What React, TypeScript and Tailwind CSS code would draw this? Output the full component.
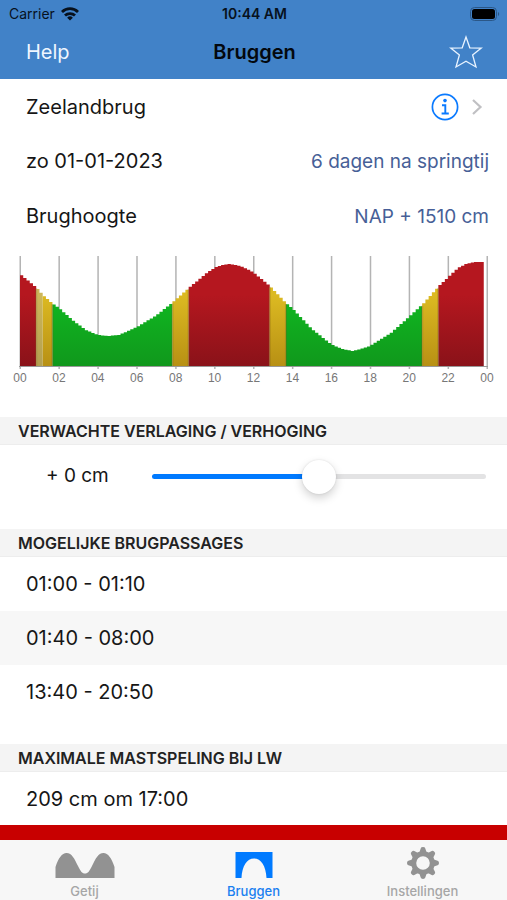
import { useState } from 'react';

// bar tops as [x, y] along the tide curve
const curve = [
  [0, 274], [16, 287], [23, 295], [32, 303], [39, 308], [55, 322], [66, 330], [78, 335],
  [88, 336], [99, 335], [117, 327], [137, 315], [152, 303], [170, 287], [188, 272], [196, 267],
  [202, 265], [209, 264], [216, 265], [223, 267], [233, 272], [250, 286], [266, 303], [273, 309],
  [292, 329], [311, 344], [322, 349], [333, 351], [341, 349], [350, 346], [371, 333], [389, 317],
  [403, 304], [420, 285], [438, 268], [446, 264], [455, 262], [467, 262],
];

// colour ranges in steps of ten minutes
const zones = [
  { from: 0, to: 5, fill: 'url(#red)' },
  { from: 5, to: 7, fill: 'url(#pale)' },
  { from: 7, to: 10, fill: 'url(#yellow)' },
  { from: 10, to: 47, fill: 'url(#green)' },
  { from: 47, to: 52, fill: 'url(#yellow)' },
  { from: 52, to: 77, fill: 'url(#red)' },
  { from: 77, to: 82, fill: 'url(#yellow)' },
  { from: 82, to: 124, fill: 'url(#green)' },
  { from: 124, to: 129, fill: 'url(#yellow)' },
  { from: 129, to: 143, fill: 'url(#red)' },
];

const hours = ['00', '02', '04', '06', '08', '10', '12', '14', '16', '18', '20', '22', '00'];
const passages = ['01:00 - 01:10', '01:40 - 08:00', '13:40 - 20:50'];
const STEP = 467 / 144;

function topAt(x: number) {
  const i = Math.max(1, curve.findIndex(([cx]) => cx >= x));
  const [x0, y0] = curve[i - 1];
  const [x1, y1] = curve[i];
  return y0 + ((y1 - y0) * (x - x0)) / (x1 - x0) - 244;
}

function zonePath(from: number, to: number) {
  let d = `M${20 + from * STEP} 122`;
  for (let i = from; i < to; i++) {
    d += `V${topAt((i + 0.5) * STEP).toFixed(1)}H${(20 + (i + 1) * STEP).toFixed(2)}`;
  }
  return d + 'V122Z';
}

function Gradient({ id, from, to }: { id: string; from: string; to: string }) {
  return (
    <linearGradient id={id} gradientUnits="userSpaceOnUse" x1="0" y1="20" x2="0" y2="122">
      <stop offset="0.3" stopColor={from} />
      <stop offset="1" stopColor={to} />
    </linearGradient>
  );
}

function TideChart() {
  return (
    <svg viewBox="0 0 507 146" className="block w-full" role="img" aria-label="Brughoogte per uur">
      <defs>
        <Gradient id="red" from="#b5171f" to="#8a1219" />
        <Gradient id="yellow" from="#dcba22" to="#b89014" />
        <Gradient id="pale" from="#cdb75a" to="#b3a050" />
        <Gradient id="green" from="#10b821" to="#10981c" />
      </defs>
      {hours.map((_, i) => (
        <rect key={i} x={19.5 + (i * 467) / 12} y="12" width="1.5" height="113" fill="#b4b4b4" />
      ))}
      {zones.map((z) => (
        <path key={z.from} d={zonePath(z.from, z.to)} fill={z.fill} />
      ))}
      {zones.slice(1).map((z) => {
        const x = 20 + z.from * STEP;
        return (
          <rect
            key={z.from}
            x={x - 1}
            y={topAt(x - 20) + 1}
            width="2"
            height={121 - topAt(x - 20)}
            fill="#7a5a10"
            opacity={z.from === 7 ? 0 : 0.3}
          />
        );
      })}
      <rect x="19" y="122" width="469" height="1" fill="#999" />
      {hours.map((h, i) => (
        <text
          key={i}
          x={20 + (i * 467) / 12}
          y="138"
          textAnchor="middle"
          fill="#777"
          className="font-['Liberation_Sans',sans-serif] text-[12px]"
        >
          {h}
        </text>
      ))}
    </svg>
  );
}

function SectionTitle({ children }: { children: string }) {
  return (
    <h2 className="h-7 border-b border-[#ededed] bg-[#f4f4f4] px-[18px] text-[16px] leading-7 font-semibold text-[#222]">
      {children}
    </h2>
  );
}

function WifiIcon() {
  return (
    <svg width="18" height="14" viewBox="0 0 18 14" fill="none" stroke="#07111d" strokeWidth="2.8">
      <path d="M1 5a11.4 11.4 0 0 1 16 0" />
      <path d="M4 8.6a7.1 7.1 0 0 1 10 0" />
      <path d="M9 13.6 6.1 10.7a4.1 4.1 0 0 1 5.8 0Z" fill="#07111d" stroke="none" />
    </svg>
  );
}

function BatteryIcon() {
  return (
    <svg width="30" height="14" viewBox="0 0 30 14">
      <rect x="0.5" y="0.5" width="26" height="13" rx="4" fill="none" stroke="#2b5787" />
      <rect x="2" y="2" width="23" height="10" rx="2.5" fill="#000" />
      <path d="M28 5c1.6.7 1.6 3.3 0 4Z" fill="#2b5787" />
    </svg>
  );
}

function StarIcon() {
  return (
    <svg width="34" height="34" viewBox="0 0 34 34" fill="none" stroke="#e8f3ff" strokeWidth="1.3">
      <path d="M17 2 20.8 12.8 32.3 13 23.6 20 27 32 17 26.2 7 32 10.4 20 1.7 13 13.2 12.8Z" />
    </svg>
  );
}

function InfoIcon() {
  return (
    <svg width="28" height="28" viewBox="0 0 28 28" fill="none" stroke="#0a7aff">
      <circle cx="14" cy="14" r="12.6" strokeWidth="1.7" />
      <circle cx="14" cy="7.6" r="1.8" fill="#0a7aff" stroke="none" />
      <path d="M11 12.2h3.3V20.4M10.6 20.5h7.2" strokeWidth="1.9" />
    </svg>
  );
}

function TideIcon() {
  return (
    <svg width="60" height="26" viewBox="0 0 60 26" fill="#929292">
      <path d="M0.5 26V15C3.5 6 7 1 11.5 1C17 1 19.5 7 23 14C25.5 19 27 21.6 30 21.6C33 21.6 34.5 19 37 14C40.5 7 43 1 48.5 1C53 1 56.5 6 59.5 15V26Z" />
    </svg>
  );
}

function BridgeIcon() {
  return (
    <svg width="38" height="26" viewBox="0 0 38 26" fill="#007aff">
      <path d="M0.5 0H37.5V26H31.5C31 14 26 6.5 19 6.5C12 6.5 7 14 6.5 26H0.5Z" />
    </svg>
  );
}

function GearIcon() {
  return (
    <svg width="32" height="32" viewBox="0 0 32 32" fill="#929292">
      {[0, 45, 90, 135, 180, 225, 270, 315].map((a) => (
        <path key={a} d="M12.2 6 13.7 1.4Q14 0 16 0Q18 0 18.3 1.4L19.8 6Z" transform={`rotate(${a} 16 16)`} />
      ))}
      <circle cx="16" cy="16" r="9.3" fill="none" stroke="#929292" strokeWidth="5" />
    </svg>
  );
}

export default function App() {
  const [offset, setOffset] = useState(0);
  const percent = (offset + 100) / 2;

  return (
    <div className="min-h-screen bg-white font-['Inter',sans-serif] text-[20px] text-[#161616]">
      <header className="bg-[#4182c8]">
        <div className="grid h-[27px] grid-cols-3 items-center pr-[7px] pl-[9px] text-[14px] text-[#07111d]">
          <div className="flex items-center gap-[6px]">
            Carrier
            <WifiIcon />
          </div>
          <div className="text-center font-semibold">10:44 AM</div>
          <div className="flex justify-end">
            <BatteryIcon />
          </div>
        </div>
        <div className="grid h-[52px] grid-cols-3 items-center pr-6 pb-[2px] pl-[26px] leading-7">
          <button className="justify-self-start text-[#eef6ff]">Help</button>
          <h1 className="text-center font-semibold text-[#03080e]">Bruggen</h1>
          <button className="justify-self-end" aria-label="Favoriet">
            <StarIcon />
          </button>
        </div>
      </header>

      <main>
        <div className="flex h-[55px] items-center justify-between pr-[24px] pl-[26px]">
          <span>Zeelandbrug</span>
          <div className="flex items-center gap-3">
            <button aria-label="Informatie">
              <InfoIcon />
            </button>
            <svg width="12" height="16" viewBox="0 0 12 16" fill="none" stroke="#c0c0c3" strokeWidth="2.2">
              <path d="M2 1 9.5 8 2 15" />
            </svg>
          </div>
        </div>
        <div className="flex h-[55px] items-center justify-between pr-[18px] pl-[26px] leading-[31px]">
          <span>zo 01-01-2023</span>
          <span className="text-[19px] text-[#475f97]">6 dagen na springtij</span>
        </div>
        <div className="flex h-[55px] items-center justify-between pr-[18px] pl-[26px] leading-[31px]">
          <span>Brughoogte</span>
          <span className="text-[19px] text-[#475f97]">NAP + 1510 cm</span>
        </div>

        <TideChart />

        <section className="mt-[27px]">
          <SectionTitle>VERWACHTE VERLAGING / VERHOGING</SectionTitle>
          <div className="flex h-[84px] items-start pt-[14px] pr-[21px] pl-[46px]">
            <label htmlFor="offset" className="w-[106px] shrink-0 text-[19px] leading-[34px]">
              {offset < 0 ? '-' : '+'} {Math.abs(offset)} cm
            </label>
            <input
              id="offset"
              type="range"
              min={-100}
              max={100}
              value={offset}
              onChange={(e) => setOffset(Number(e.target.value))}
              style={{ backgroundImage: `linear-gradient(to right, #007aff ${percent}%, #e3e3e4 ${percent}%)` }}
              className="mt-[15px] h-[5px] min-w-0 flex-1 appearance-none rounded-full [&::-webkit-slider-thumb]:size-[34px] [&::-webkit-slider-thumb]:appearance-none [&::-webkit-slider-thumb]:rounded-full [&::-webkit-slider-thumb]:bg-white [&::-webkit-slider-thumb]:shadow-[0_4px_10px_rgba(0,0,0,0.18),0_0_2px_rgba(0,0,0,0.12)]"
            />
          </div>
        </section>

        <section>
          <SectionTitle>MOGELIJKE BRUGPASSAGES</SectionTitle>
          <ul>
            {passages.map((p) => (
              <li key={p} className="h-[54px] pl-[26px] leading-[54px] even:bg-[#f7f7f7]">
                {p}
              </li>
            ))}
          </ul>
        </section>

        <section className="mt-[25px]">
          <SectionTitle>MAXIMALE MASTSPELING BIJ LW</SectionTitle>
          <p className="h-[53px] pl-[26px] leading-[54px]">209 cm om 17:00</p>
        </section>
      </main>

      <div className="h-[15px] bg-[#c80000]" />
      <nav className="grid h-[60px] grid-cols-3 bg-[#f7f7f7] text-[13px] leading-4 font-medium text-[#a6a6a6]">
        <a href="#getij" className="flex flex-col items-center justify-end gap-[5px] pb-px">
          <TideIcon />
          Getij
        </a>
        <a href="#bruggen" className="flex flex-col items-center justify-end gap-[5px] pb-px text-[#1a80f0]">
          <BridgeIcon />
          Bruggen
        </a>
        <a href="#instellingen" className="flex flex-col items-center justify-end gap-1 pb-px">
          <GearIcon />
          Instellingen
        </a>
      </nav>
    </div>
  );
}
